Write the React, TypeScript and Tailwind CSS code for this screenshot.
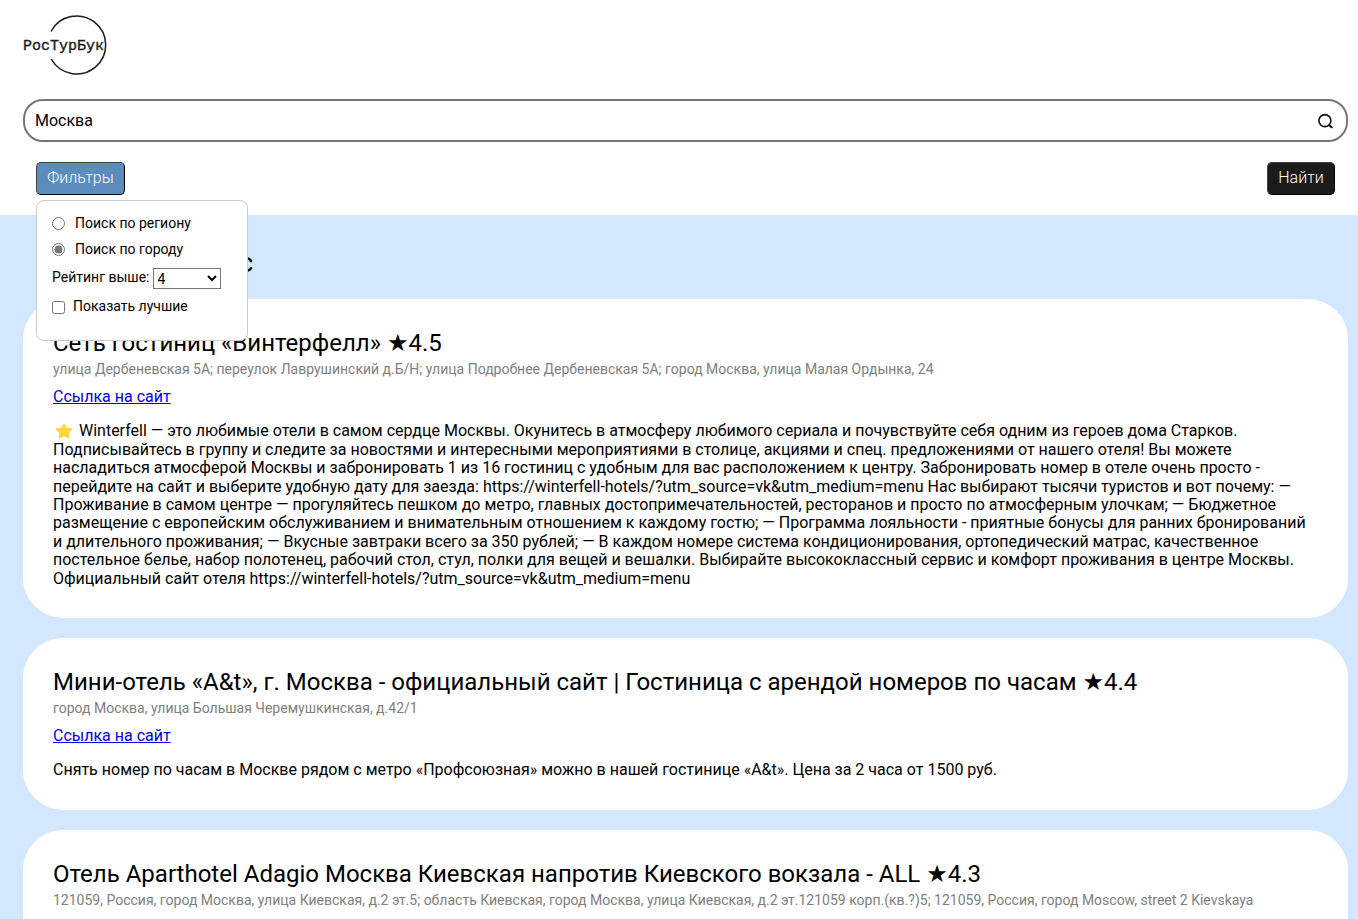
import { useState } from 'react';

type Hotel = {
  title: string;
  rating: string;
  address: string;
  text: string;
  starred?: boolean;
};

const hotels: Hotel[] = [
  {
    title: 'Сеть гостиниц «Винтерфелл»',
    rating: '4.5',
    address:
      'улица Дербеневская 5А; переулок Лаврушинский д.Б/Н; улица Подробнее Дербеневская 5А; город Москва, улица Малая Ордынка, 24',
    starred: true,
    text: 'Winterfell — это любимые отели в самом сердце Москвы. Окунитесь в атмосферу любимого сериала и почувствуйте себя одним из героев дома Старков. Подписывайтесь в группу и следите за новостями и интересными мероприятиями в столице, акциями и спец. предложениями от нашего отеля! Вы можете насладиться атмосферой Москвы и забронировать 1 из 16 гостиниц с удобным для вас расположением к центру. Забронировать номер в отеле очень просто - перейдите на сайт и выберите удобную дату для заезда: https://winterfell-hotels/?utm_source=vk&utm_medium=menu Нас выбирают тысячи туристов и вот почему: — Проживание в самом центре — прогуляйтесь пешком до метро, главных достопримечательностей, ресторанов и просто по атмосферным улочкам; — Бюджетное размещение с европейским обслуживанием и внимательным отношением к каждому гостю; — Программа лояльности - приятные бонусы для ранних бронирований и длительного проживания; — Вкусные завтраки всего за 350 рублей; — В каждом номере система кондиционирования, ортопедический матрас, качественное постельное белье, набор полотенец, рабочий стол, стул, полки для вещей и вешалки. Выбирайте высококлассный сервис и комфорт проживания в центре Москвы. Официальный сайт отеля https://winterfell-hotels/?utm_source=vk&utm_medium=menu',
  },
  {
    title: 'Мини-отель «A&t», г. Москва - официальный сайт | Гостиница с арендой номеров по часам',
    rating: '4.4',
    address: 'город Москва, улица Большая Черемушкинская, д.42/1',
    text: 'Снять номер по часам в Москве рядом с метро «Профсоюзная» можно в нашей гостинице «A&t». Цена за 2 часа от 1500 руб.',
  },
  {
    title: 'Отель Aparthotel Adagio Москва Киевская напротив Киевского вокзала - ALL',
    rating: '4.3',
    address:
      '121059, Россия, город Москва, улица Киевская, д.2 эт.5; область Киевская, город Москва, улица Киевская, д.2 эт.121059 корп.(кв.?)5; 121059, Россия, город Moscow, street 2 Kievskaya',
    text: '',
  },
];

function Logo() {
  return (
    <svg width="86" height="62" viewBox="0 0 86 62" role="img" aria-label="РосТурБук">
      <path d="M28 17.5 A29 29 0 1 1 28.3 45" fill="none" stroke="#1b1b1b" strokeWidth="1.5" />
      <text
        x="0"
        y="36"
        className="font-['Liberation_Mono',monospace] text-[15px]"
        fill="#1b1b1b"
        stroke="#1b1b1b"
        strokeWidth="0.35"
      >
        РосТурБук
      </text>
    </svg>
  );
}

function SearchIcon() {
  return (
    <svg width="16" height="16" viewBox="0 0 16 16" fill="none" stroke="#111" strokeWidth="1.6" strokeLinecap="round">
      <circle cx="7.9" cy="7.6" r="6" />
      <path d="M12.4 12.2 L14.6 14.2" strokeWidth="2.2" />
    </svg>
  );
}

function StarEmoji() {
  return (
    <svg width="18" height="16" viewBox="0 0 18 16" className="mx-0.5 inline-block align-[-3px]" aria-hidden="true">
      <path
        d="M9 1.6 L11.1 5.6 L16 6.3 L12.6 9.6 L13.4 14.3 L9 12.2 L4.6 14.3 L5.4 9.6 L2 6.3 L6.9 5.6 Z"
        fill="#fdd63b"
        stroke="#fdd63b"
        strokeWidth="2"
        strokeLinejoin="round"
      />
    </svg>
  );
}

function Filters() {
  const [scope, setScope] = useState('city');
  return (
    <div className="absolute top-full left-0 z-10 mt-[5px] w-[212px] rounded-lg border border-[#ccc] bg-white px-[15px] pt-[14px] pb-[26px] text-sm leading-4">
      <label className="mb-[10px] flex items-center gap-[10px]">
        <input
          type="radio"
          name="scope"
          className="size-[13px] accent-[#767676]"
          checked={scope === 'region'}
          onChange={() => setScope('region')}
        />
        Поиск по региону
      </label>
      <label className="mb-[10px] flex items-center gap-[10px]">
        <input
          type="radio"
          name="scope"
          className="size-[13px] accent-[#767676]"
          checked={scope === 'city'}
          onChange={() => setScope('city')}
        />
        Поиск по городу
      </label>
      <div className="mb-[9px] flex items-end gap-[3px]">
        <label htmlFor="rating" className="pb-1">
          Рейтинг выше:
        </label>
        <select id="rating" defaultValue="4" className="mt-px h-[21px] w-[68px] border border-[#767676] bg-white">
          <option>3</option>
          <option>4</option>
          <option>5</option>
        </select>
      </div>
      <label className="flex items-end gap-2">
        <input type="checkbox" className="size-[13px]" />
        Показать лучшие
      </label>
    </div>
  );
}

function HotelCard({ hotel }: { hotel: Hotel }) {
  return (
    <article className="rounded-[40px] bg-white p-[30px]">
      <h2 className="text-2xl leading-7">
        {hotel.title} ★{hotel.rating}
      </h2>
      <p className="mt-1 text-sm leading-4 text-[#808080]">{hotel.address}</p>
      <a href="#site" className="mt-[11px] block w-fit leading-[1.15] text-[#0000ee] underline">
        Ссылка на сайт
      </a>
      <p className="mt-4 leading-[1.15]">
        {hotel.starred && <StarEmoji />}
        {hotel.starred && ' '}
        {hotel.text}
      </p>
    </article>
  );
}

export default function App() {
  return (
    <div className="h-screen overflow-hidden bg-[#d3e8ff] font-[Roboto,'DejaVu_Sans',sans-serif] text-base text-black">
      <header className="bg-white pt-[14px] pr-[10px] pb-5 pl-[23px]">
        <Logo />
        <div className="mt-[23px] flex h-[43px] items-center rounded-[20px] border-2 border-[#767676] pr-[13px] pl-[10px]">
          <input aria-label="Поиск" defaultValue="Москва" className="min-w-0 flex-1 outline-none" />
          <button type="button" aria-label="Искать">
            <SearchIcon />
          </button>
        </div>
        <div className="mt-5 flex justify-between px-[13px]">
          <div className="relative">
            <button
              type="button"
              className="h-[33px] w-[89px] rounded-[5px] border border-black border-t-[#444] border-l-[#444] bg-[#5c8bbe] pb-[2px] font-light text-white"
            >
              Фильтры
            </button>
            <Filters />
          </div>
          <button
            type="button"
            className="h-[33px] w-[68px] rounded-[5px] border border-black border-t-[#444] border-l-[#444] bg-[#1b1b1b] pb-[2px] font-light text-white"
          >
            Найти
          </button>
        </div>
      </header>
      <main className="pt-8 pr-[10px] pl-[23px]">
        <h1 className="mb-5 pl-4 text-[28px] leading-8">Ответ на запрос</h1>
        <div className="flex flex-col gap-5">
          {hotels.map((hotel) => (
            <HotelCard key={hotel.title} hotel={hotel} />
          ))}
        </div>
      </main>
    </div>
  );
}
